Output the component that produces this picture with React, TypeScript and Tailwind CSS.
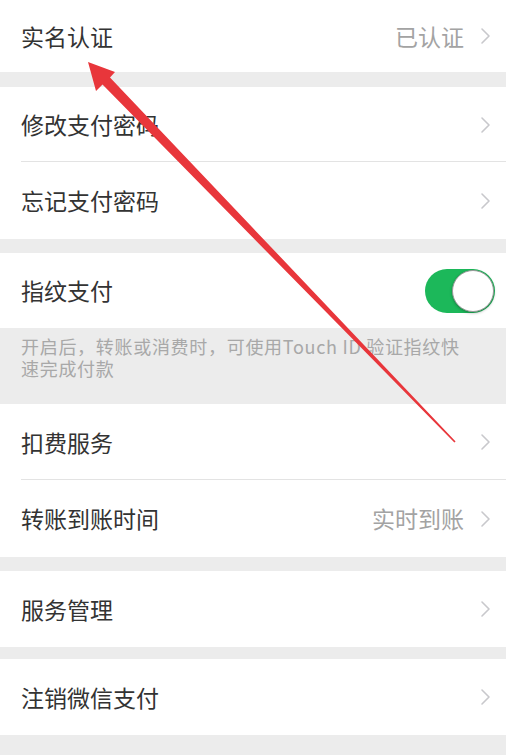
import React from 'react';

const font = '"Noto Sans CJK SC", "Noto Sans", sans-serif';

const Chevron = () => (
  <svg width="11" height="18" viewBox="0 0 11 18" className="shrink-0">
    <path d="M2 2 L9 9 L2 16" fill="none" stroke="#c8c8cc" strokeWidth="1.6" strokeLinecap="round" strokeLinejoin="round" />
  </svg>
);

interface RowProps {
  label: string;
  value?: string;
  h: string;
  divider?: boolean;
}

const Row: React.FC<RowProps> = ({ label, value, h, divider }) => (
  <div className={`relative flex items-center bg-white pl-[21px] pr-[15px] ${h}`}>
    <span className="flex-1 text-[23px] text-[#333333]">{label}</span>
    {value && <span className="mr-[16px] text-[23px] text-[#a3a3a3]">{value}</span>}
    <Chevron />
    {divider && <div className="absolute bottom-0 left-[21px] right-0 h-px bg-[#e3e3e3]" />}
  </div>
);

const Toggle = () => (
  <div className="relative flex h-[44px] w-[70px] items-center rounded-full bg-[#1cb85a]">
    <div className="absolute right-[1px] h-[42px] w-[42px] rounded-full border border-[#9a9a9a] bg-white shadow-[0_1px_3px_rgba(0,0,0,0.3)]" />
  </div>
);

export default function App() {
  return (
    <div className="relative h-[755px] w-[506px] overflow-hidden bg-[#ececec]" style={{ fontFamily: font }}>
      <Row label="实名认证" value="已认证" h="h-[72px]" />
      <div className="h-[15px]" />
      <Row label="修改支付密码" h="h-[75px]" divider />
      <Row label="忘记支付密码" h="h-[77px]" />
      <div className="h-[14px]" />
      <div className="flex h-[75px] items-center justify-between bg-white pl-[21px] pr-[11px]">
        <span className="text-[23px] text-[#333333]">指纹支付</span>
        <Toggle />
      </div>
      <div className="h-[76px] pl-[21px] pr-[10px] pt-[7px] text-[18px] leading-[22px] tracking-[0.7px] text-[#a8a8a8]">
        开启后，转账或消费时，可使用Touch ID 验证指纹快
        <br />
        速完成付款
      </div>
      <Row label="扣费服务" h="h-[76px]" divider />
      <Row label="转账到账时间" value="实时到账" h="h-[77px]" />
      <div className="h-[14px]" />
      <Row label="服务管理" h="h-[76px]" />
      <div className="h-[12px]" />
      <Row label="注销微信支付" h="h-[76px]" />

      {/* red annotation arrow */}
      <svg className="pointer-events-none absolute left-0 top-0" width="506" height="755" viewBox="0 0 506 755">
        <polygon
          points="88,62 115,72 110,77.5 455.6,441.4 454.4,442.6 102.5,84.6 96,91"
          fill="#e8363b"
        />
      </svg>
    </div>
  );
}
